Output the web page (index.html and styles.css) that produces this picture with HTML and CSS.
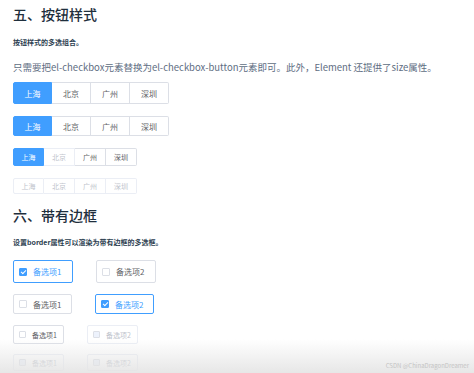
FILE: index.html
```html
<!DOCTYPE html>
<html lang="zh">
<head>
    <meta charset="UTF-8">
    <title>Checkbox 多选框</title>
    <link rel="stylesheet" href="styles.css">
</head>
<body>
    <div class="page">
        <h3 class="title">五、按钮样式</h3>
        <p class="desc">按钮样式的多选组合。</p>
        <p class="text">只需要把el-checkbox元素替换为el-checkbox-button元素即可。此外，Element 还提供了size属性。</p>

        <div class="btn-group size-default">
            <span class="cb-btn checked">上海</span><span class="cb-btn">北京</span><span class="cb-btn">广州</span><span class="cb-btn">深圳</span>
        </div>
        <div class="btn-group size-medium">
            <span class="cb-btn checked">上海</span><span class="cb-btn">北京</span><span class="cb-btn">广州</span><span class="cb-btn">深圳</span>
        </div>
        <div class="btn-group size-small">
            <span class="cb-btn checked">上海</span><span class="cb-btn disabled">北京</span><span class="cb-btn">广州</span><span class="cb-btn">深圳</span>
        </div>
        <div class="btn-group size-mini">
            <span class="cb-btn disabled">上海</span><span class="cb-btn disabled">北京</span><span class="cb-btn disabled">广州</span><span class="cb-btn disabled">深圳</span>
        </div>

        <h3 class="title title-2">六、带有边框</h3>
        <p class="desc desc-2">设置border属性可以渲染为带有边框的多选框。</p>

        <div class="border-row row-default">
            <label class="cb-border checked"><span class="box"></span>备选项1</label>
            <label class="cb-border"><span class="box"></span>备选项2</label>
        </div>
        <div class="border-row row-medium">
            <label class="cb-border"><span class="box"></span>备选项1</label>
            <label class="cb-border checked"><span class="box"></span>备选项2</label>
        </div>
        <div class="border-row row-small">
            <label class="cb-border"><span class="box"></span>备选项1</label>
            <label class="cb-border disabled"><span class="box"></span>备选项2</label>
        </div>
        <div class="border-row row-mini">
            <label class="cb-border disabled"><span class="box"></span>备选项1</label>
            <label class="cb-border disabled"><span class="box"></span>备选项2</label>
        </div>
    </div>

    <!-- bottom fade of the screenshot -->
    <div class="fade">
        <span class="watermark">CSDN @ChinaDragonDreamer</span>
    </div>
</body>
</html>
```

FILE: styles.css
```css
body {
    margin: 0;
    background: #fff;
    font-family: "Noto Sans CJK SC", "Noto Sans", sans-serif;
    color: #606266;
    height: 373px;
    overflow: hidden;
    position: relative;
}

.page {
    padding: 6px 0 0 13px;
}

.title {
    margin: 0;
    font-size: 14px;
    line-height: 16px;
    font-weight: 500;
    color: #1f2f3d;
}

.title-2 {
    margin-top: 13px;
}

.desc {
    margin: 15px 0 0;
    font-size: 7px;
    line-height: 10px;
    font-weight: bold;
    color: #2c3e50;
}

.desc-2 {
    margin-top: 14px;
}

.text {
    margin: 14px 0 0;
    font-size: 9.5px;
    line-height: 12px;
    color: #5e6d82;
}

/* checkbox buttons */
.btn-group {
    display: flex;
    margin-top: 12px;
}

.size-default {
    margin-top: 9px;
}

.cb-btn {
    display: flex;
    align-items: center;
    justify-content: center;
    box-sizing: border-box;
    border: 1px solid #dcdfe6;
    border-left: none;
    background: #fff;
    color: #606266;
}

.cb-btn:first-child {
    border-left: 1px solid #dcdfe6;
    border-radius: 2px 0 0 2px;
}

.cb-btn:last-child {
    border-radius: 0 2px 2px 0;
}

.cb-btn.checked {
    background: #409eff;
    border-color: #409eff;
    color: #fff;
}

.cb-btn.disabled {
    color: #c0c4cc;
    border-color: #ebeef5;
}

.size-default .cb-btn {
    width: 39px;
    height: 22px;
    font-size: 8px;
}

.size-medium .cb-btn {
    width: 39px;
    height: 20px;
    font-size: 8px;
}

.size-small .cb-btn,
.size-mini .cb-btn {
    width: 31px;
    height: 18px;
    font-size: 7px;
}

.size-mini {
    margin-top: 12px;
}

.size-mini .cb-btn {
    height: 16px;
}

/* bordered checkboxes */
.border-row {
    display: flex;
    gap: 23px;
    margin-top: 11px;
}

.row-default {
    margin-top: 13px;
}

.row-mini {
    margin-top: 10px;
}

.cb-border {
    display: flex;
    align-items: center;
    box-sizing: border-box;
    border: 1px solid #dcdfe6;
    border-radius: 2px;
    padding-left: 5px;
    color: #606266;
}

.cb-border .box {
    box-sizing: border-box;
    width: 8px;
    height: 8px;
    border: 1px solid #dcdfe6;
    border-radius: 1px;
    background: #fff;
    margin-right: 6px;
    position: relative;
}

.cb-border.checked {
    border-color: #409eff;
    color: #409eff;
}

.cb-border.checked .box {
    background: #409eff;
    border-color: #409eff;
}

.cb-border.checked .box::after {
    content: "";
    position: absolute;
    left: 1.5px;
    top: 0px;
    width: 2px;
    height: 4px;
    border: solid #fff;
    border-width: 0 1px 1px 0;
    transform: rotate(45deg);
}

.cb-border.disabled {
    border-color: #ebeef5;
    color: #c0c4cc;
}

.cb-border.disabled .box {
    background: #edf2fc;
    border-color: #dcdfe6;
}

.row-default .cb-border {
    width: 60px;
    height: 23px;
    font-size: 8px;
}

.row-medium .cb-border {
    width: 59px;
    height: 20px;
    font-size: 8px;
}

.row-small .cb-border {
    width: 51px;
    height: 19px;
    font-size: 7px;
}

.row-mini .cb-border {
    width: 51px;
    height: 17px;
    font-size: 7px;
}

.row-small .box,
.row-mini .box {
    width: 7px;
    height: 7px;
}

/* bottom fade and watermark */
.fade {
    position: absolute;
    left: 0;
    right: 0;
    bottom: 0;
    height: 34px;
    background: linear-gradient(to bottom, rgba(236, 236, 236, 0), rgba(228, 228, 228, 0.9));
    display: flex;
    justify-content: flex-end;
    align-items: flex-end;
}

.watermark {
    font-size: 6px;
    line-height: 8px;
    color: #c4c4c4;
    padding: 0 5px 3px 0;
}
```
